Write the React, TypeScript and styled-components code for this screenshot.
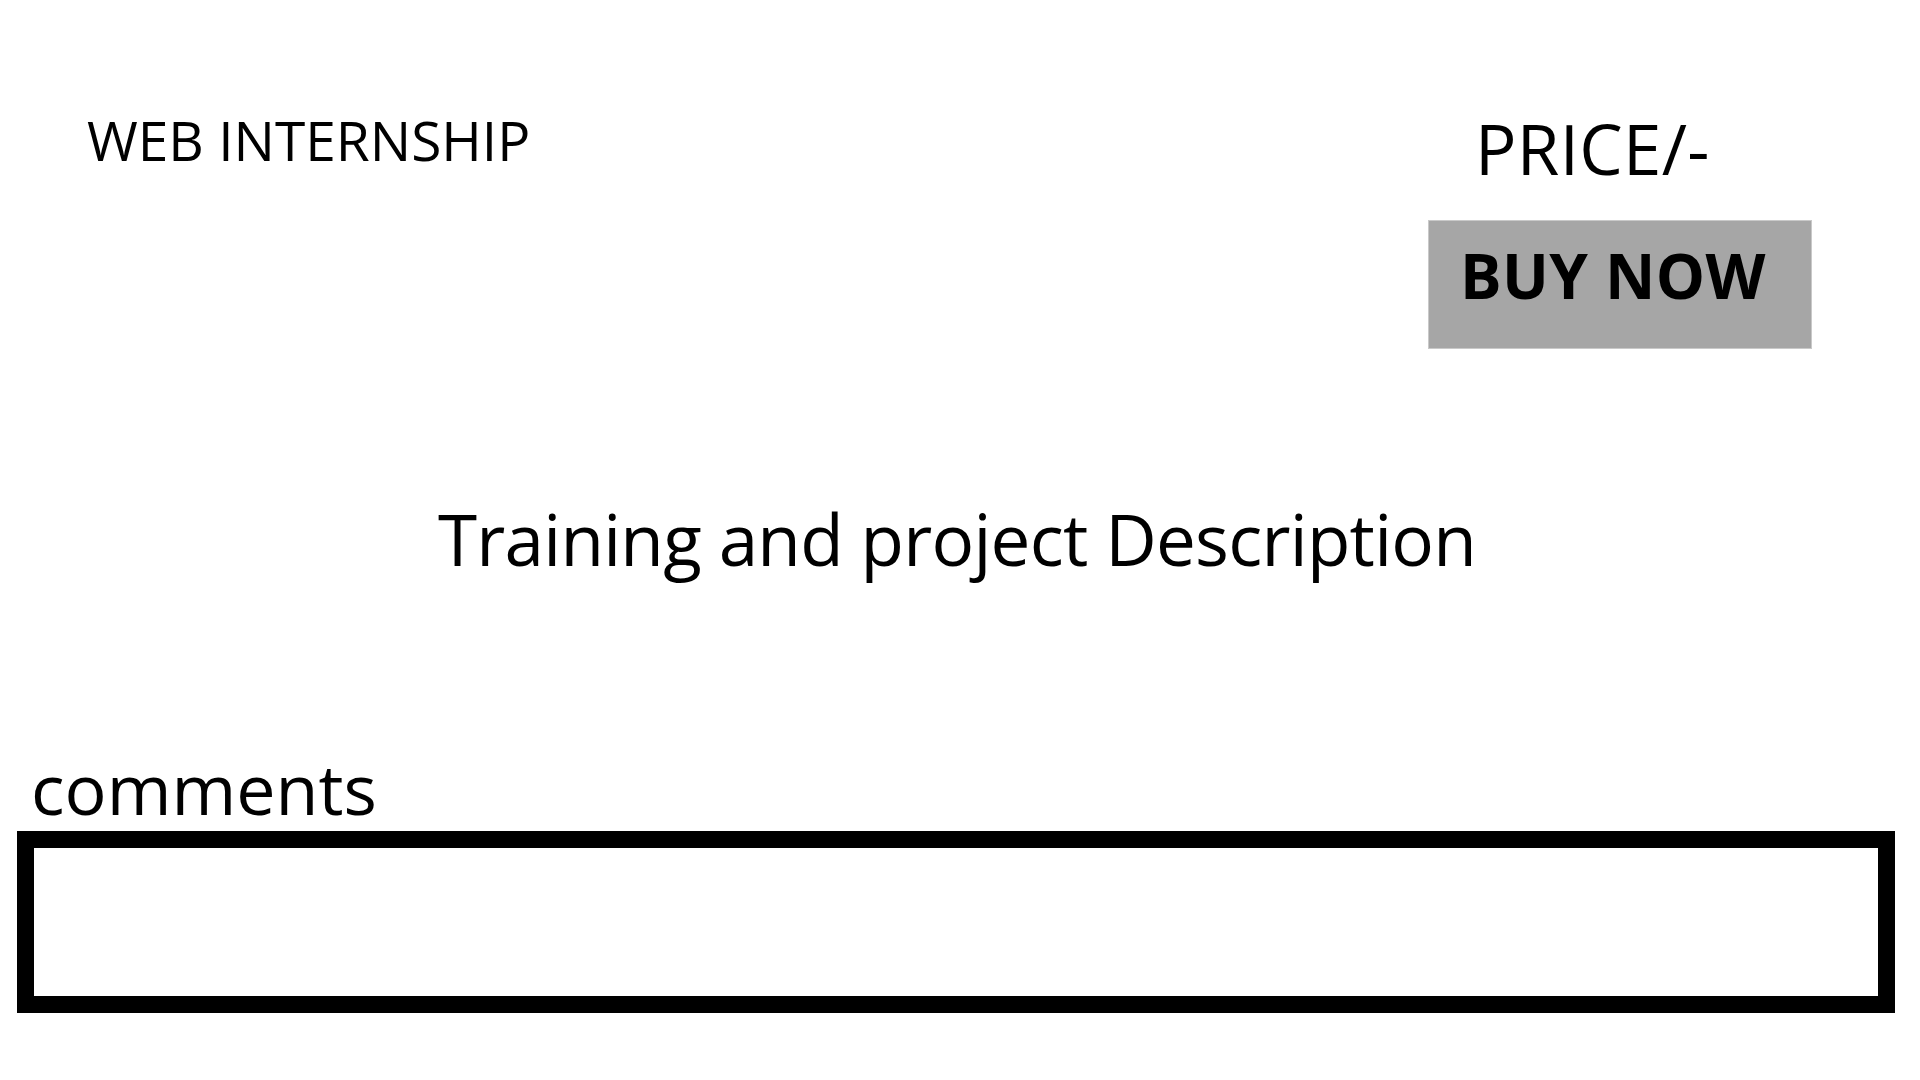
import React from 'react'
import styled, { createGlobalStyle } from 'styled-components'

const GlobalStyle = createGlobalStyle`
  html, body {
    margin: 0;
    padding: 0;
    background: #fff;
  }
  body {
    font-family: 'Open Sans', 'Noto Sans', sans-serif;
    color: #000;
  }
`

const Page = styled.div`
  width: 1920px;
  height: 1080px;
  box-sizing: border-box;
  padding: 0 25px 0 17px;
  display: flex;
  flex-direction: column;
  overflow: hidden;
`

const Header = styled.header`
  display: flex;
  justify-content: space-between;
  align-items: flex-start;
`

const Title = styled.h1`
  margin: 112px 0 0 70px;
  font-size: 55px;
  font-weight: 400;
  line-height: 1;
`

const PriceColumn = styled.div`
  display: flex;
  flex-direction: column;
  width: 384px;
  margin: 114px 83px 0 0;
`

const Price = styled.div`
  margin-left: 47px;
  font-size: 69px;
  letter-spacing: 0.3px;
  line-height: 1;
`

const BuyButton = styled.button`
  margin-top: 37px;
  height: 129px;
  box-sizing: border-box;
  background: #a6a6a6;
  border: 1px solid #c9c9c9;
  padding: 23px 0 0 31px;
  display: flex;
  align-items: flex-start;
  font-family: 'Open Sans', 'Noto Sans', sans-serif;
  font-weight: 700;
  font-size: 62px;
  letter-spacing: 0.4px;
  line-height: 1;
  color: #000;
  cursor: pointer;
`

const Description = styled.h2`
  margin: 154px 0 0;
  padding-left: 2px;
  text-align: center;
  font-size: 71px;
  letter-spacing: -0.75px;
  font-weight: 400;
  line-height: 1;
`

const CommentsLabel = styled.label`
  display: block;
  margin: 179px 0 0 14px;
  font-size: 70px;
  line-height: 1;
`

const CommentBox = styled.textarea`
  margin-top: 8px;
  width: 100%;
  height: 182px;
  box-sizing: border-box;
  border: 17px solid #000;
  resize: none;
  outline: none;
  padding: 10px;
  font-family: 'Open Sans', 'Noto Sans', sans-serif;
  font-size: 24px;
`

export default function App() {
  return (
    <>
      <GlobalStyle />
      <Page>
        <Header>
          <Title>WEB INTERNSHIP</Title>
          <PriceColumn>
            <Price>PRICE/-</Price>
            <BuyButton>BUY NOW</BuyButton>
          </PriceColumn>
        </Header>
        <Description>Training and project Description</Description>
        <CommentsLabel htmlFor="comments">comments</CommentsLabel>
        <CommentBox id="comments" />
      </Page>
    </>
  )
}
